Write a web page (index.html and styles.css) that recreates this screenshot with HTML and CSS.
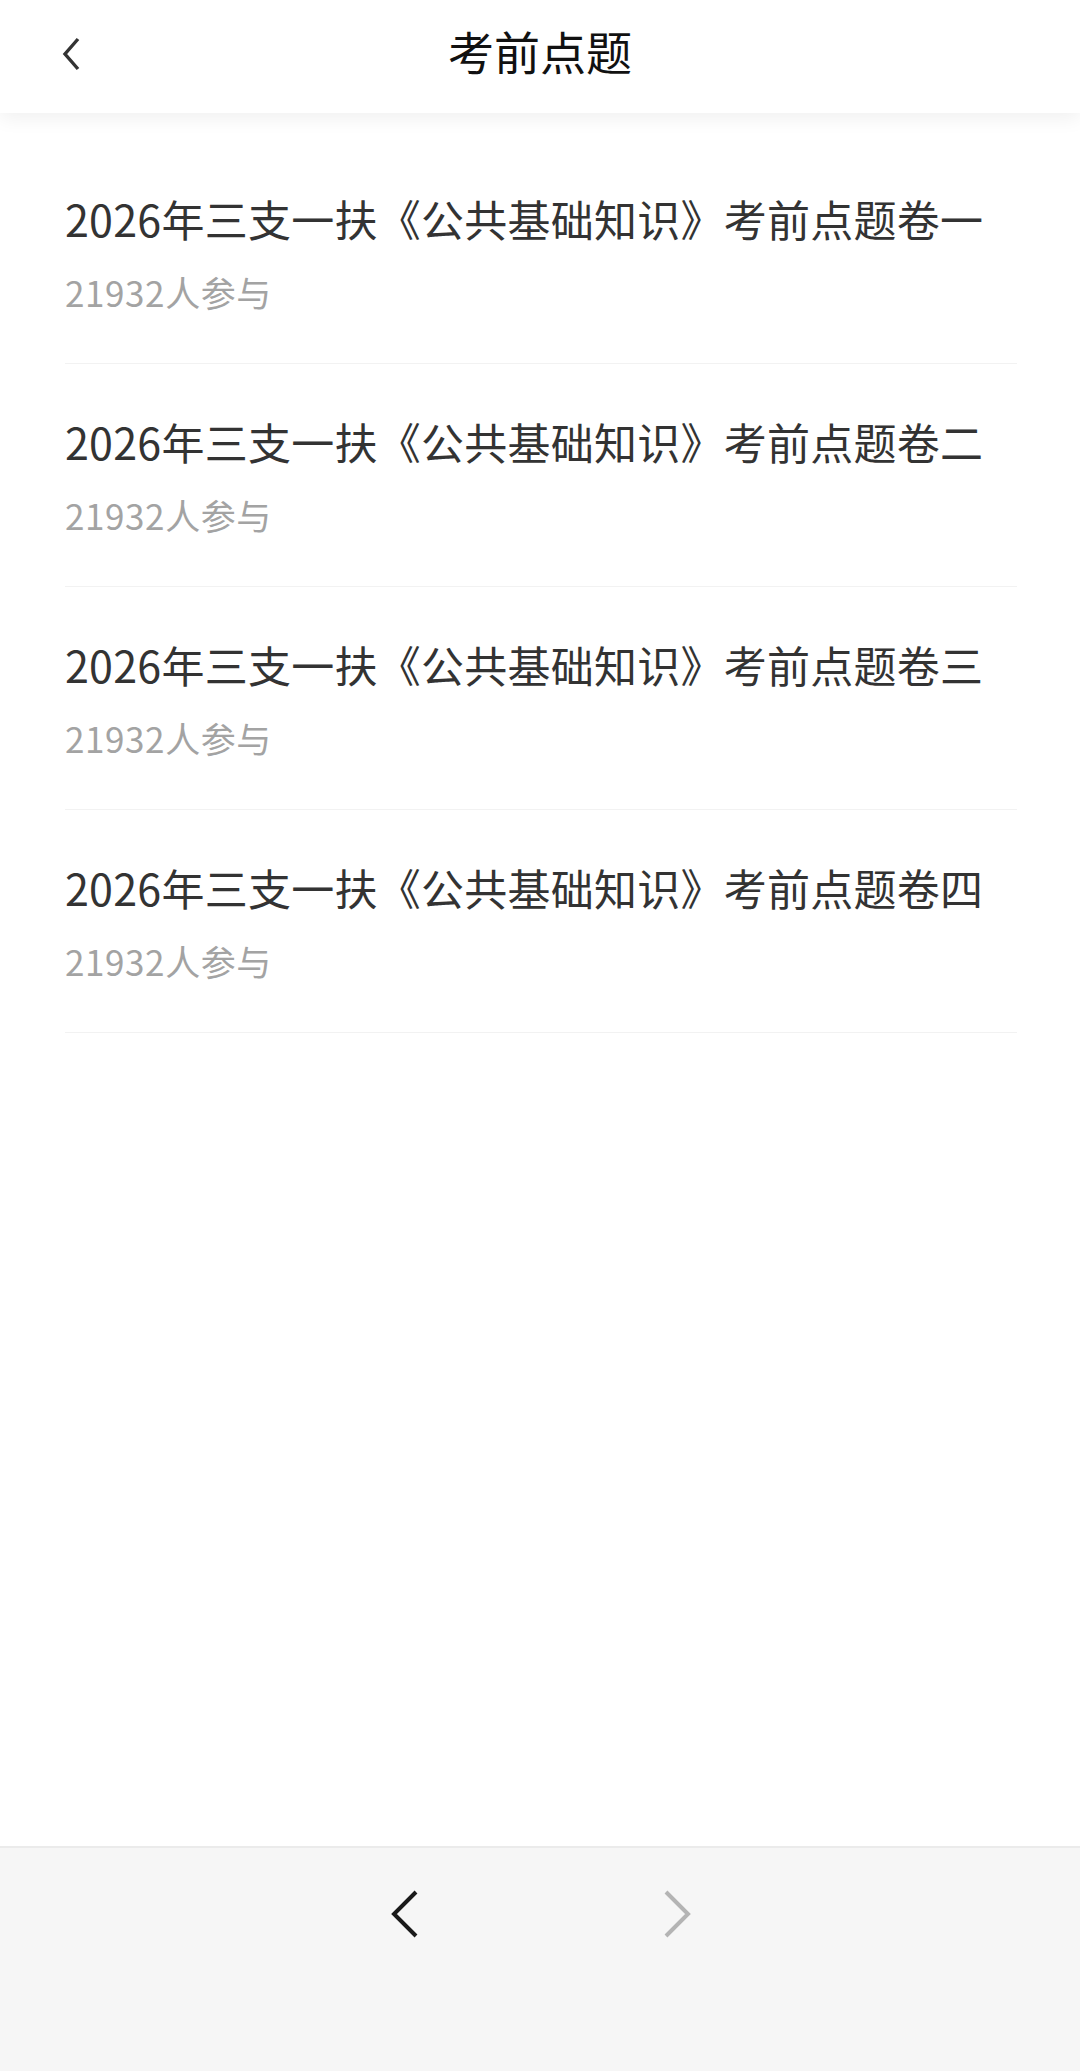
FILE: index.html
```html
<!DOCTYPE html>
<html lang="zh-CN">
<head>
<meta charset="utf-8">
<title>考前点题</title>
<link rel="stylesheet" href="styles.css">
</head>
<body>
<div class="page">
  <header class="topbar">
    <span class="back">
      <svg width="24" height="36" viewBox="0 0 24 36"><path d="M18 3 L5 18 L18 33" fill="none" stroke="#333" stroke-width="3.4" stroke-linecap="butt" stroke-linejoin="miter"/></svg>
    </span>
    <h1 class="title">考前点题</h1>
  </header>
  <main class="list">
    <div class="item">
      <div class="item-title">2026年三支一扶《公共基础知识》考前点题卷一</div>
      <div class="item-sub">21932人参与</div>
    </div>
    <div class="item">
      <div class="item-title">2026年三支一扶《公共基础知识》考前点题卷二</div>
      <div class="item-sub">21932人参与</div>
    </div>
    <div class="item">
      <div class="item-title">2026年三支一扶《公共基础知识》考前点题卷三</div>
      <div class="item-sub">21932人参与</div>
    </div>
    <div class="item">
      <div class="item-title">2026年三支一扶《公共基础知识》考前点题卷四</div>
      <div class="item-sub">21932人参与</div>
    </div>
  </main>
  <footer class="bottombar">
    <span class="nav">
      <svg width="30" height="50" viewBox="0 0 30 50"><path d="M26 3 L4 25 L26 47" fill="none" stroke="#1a1a1a" stroke-width="4"/></svg>
    </span>
    <span class="nav">
      <svg width="30" height="50" viewBox="0 0 30 50"><path d="M4 3 L26 25 L4 47" fill="none" stroke="#b4b4b4" stroke-width="4"/></svg>
    </span>
  </footer>
</div>
</body>
</html>
```
FILE: styles.css
```css
* { box-sizing: border-box; margin: 0; padding: 0; }
html, body { width: 1080px; height: 2071px; background: #fff; }
body {
  font-family: "Noto Sans CJK SC", "Noto Sans", sans-serif;
  overflow: hidden;
}
.page {
  height: 2071px;
  display: flex;
  flex-direction: column;
}
.topbar {
  position: relative;
  height: 113px;
  flex: 0 0 113px;
  display: flex;
  align-items: center;
  justify-content: center;
  background: #fff;
  box-shadow: 0 6px 18px rgba(0, 0, 0, 0.06);
  z-index: 1;
}
.back {
  position: absolute;
  left: 60px;
  top: 36px;
  width: 24px;
  height: 36px;
  display: flex;
}
.title {
  font-size: 46px;
  font-weight: 400;
  color: #111;
  line-height: 60px;
  margin-top: -14px;
}
.list {
  flex: 1;
  padding: 28px 63px 0 65px;
}
.item {
  height: 223px;
  padding-top: 47px;
  border-bottom: 1px solid #f2f2f2;
}
.item-title {
  font-size: 43px;
  line-height: 60px;
  letter-spacing: 0.25px;
  color: #333;
  white-space: nowrap;
}
.item-sub {
  margin-top: 20px;
  font-size: 35px;
  line-height: 48px;
  letter-spacing: 0.6px;
  color: #a3a3a3;
}
.bottombar {
  flex: 0 0 225px;
  background: #f6f6f6;
  border-top: 2px solid #ebebeb;
  display: flex;
  justify-content: center;
  align-items: flex-start;
  gap: 242px;
  padding-top: 41px;
  padding-left: 2px;
}
.nav {
  width: 30px;
  height: 50px;
  display: flex;
}
```
